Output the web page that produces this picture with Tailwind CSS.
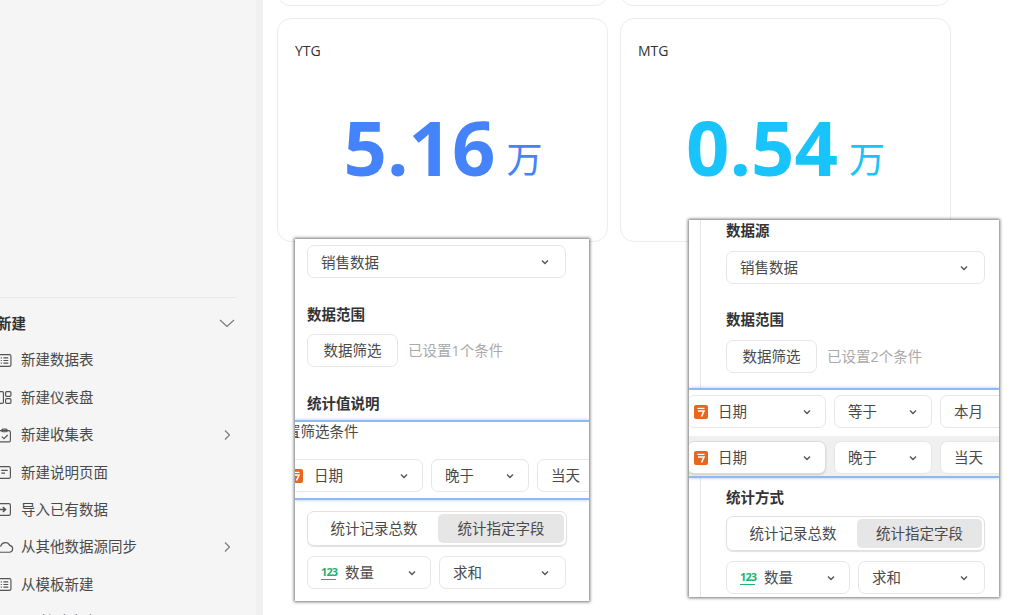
<!DOCTYPE html>
<html lang="zh-CN">
<head>
<meta charset="UTF-8">
<title>仪表盘</title>
<script src="https://cdn.jsdelivr.net/npm/@tailwindcss/browser@4"></script>
</head>
<body class="relative w-[1024px] h-[615px] overflow-hidden bg-white font-['Open_Sans','Noto_Sans_CJK_SC',sans-serif] text-[14.5px] text-[#4a4a4a]">
<div class="flex h-full">
  <!-- Sidebar -->
  <aside class="w-[256px] h-full shrink-0 bg-[#f5f5f5] overflow-hidden relative">
    <div class="mt-[297px] w-[236px] border-t border-[#e8e8e8]"></div>
    <div class="flex items-center justify-between w-[236px] h-[51px] -mt-px -mb-[6.4px]">
      <span class="font-bold text-[#333] -ml-[3px] translate-y-px">新建</span>
      <svg class="w-4 h-4 mr-px" viewBox="0 0 16 16" fill="none" stroke="#777" stroke-width="1.1"><path d="M1 5l7 6.5L15 5"/></svg>
    </div>
    <div class="flex flex-col w-[236px]">
      <div class="flex items-center h-[37.4px]"><svg class="w-[15px] h-[15px] -ml-[3px] mr-[9px] shrink-0" viewBox="0 0 14 14" fill="none" stroke="#555" stroke-width="1.1"><rect x="1" y="1.5" width="12" height="11" rx="1.5"/><path d="M3.5 4.5h1M3.5 7h1M3.5 9.5h1M6 4.5h4.5M6 7h4.5M6 9.5h4.5"/></svg><span>新建数据表</span></div>
      <div class="flex items-center h-[37.4px]"><svg class="w-[15px] h-[15px] -ml-[3px] mr-[9px] shrink-0" viewBox="0 0 14 14" fill="none" stroke="#555" stroke-width="1.1"><rect x="1" y="1.5" width="5" height="11" rx="1"/><rect x="8" y="1.5" width="5" height="4.5" rx="1"/><rect x="8" y="8" width="5" height="4.5" rx="1"/></svg><span>新建仪表盘</span></div>
      <div class="flex items-center h-[37.4px]"><svg class="w-[15px] h-[15px] -ml-[3px] mr-[9px] shrink-0" viewBox="0 0 14 14" fill="none" stroke="#555" stroke-width="1.1"><rect x="1.5" y="2.5" width="11" height="10.5" rx="1.5"/><rect x="4.5" y="1" width="5" height="2.5" rx="1"/><path d="M4.5 8l2 2 3.5-3.5"/></svg><span>新建收集表</span><svg class="w-3 h-3 ml-auto mr-[3px]" viewBox="0 0 12 12" fill="none" stroke="#777" stroke-width="1.1"><path d="M4 1.5L8.5 6 4 10.5"/></svg></div>
      <div class="flex items-center h-[37.4px]"><svg class="w-[15px] h-[15px] -ml-[3px] mr-[9px] shrink-0" viewBox="0 0 14 14" fill="none" stroke="#555" stroke-width="1.1"><rect x="1" y="1.5" width="11.5" height="11" rx="1.5"/><path d="M4 5h6M4 7.5h3.5"/></svg><span>新建说明页面</span></div>
      <div class="flex items-center h-[37.4px]"><svg class="w-[15px] h-[15px] -ml-[3px] mr-[9px] shrink-0" viewBox="0 0 14 14" fill="none" stroke="#555" stroke-width="1.1"><rect x="1" y="1.5" width="11.5" height="11" rx="1.5"/><path d="M1 7h6.5M5.5 4.8L8 7l-2.5 2.2" stroke-width="1.4"/></svg><span>导入已有数据</span></div>
      <div class="flex items-center h-[37.4px]"><svg class="w-[17px] h-[15px] -ml-[3px] mr-[7px] shrink-0" viewBox="0 0 16 14" fill="none" stroke="#555" stroke-width="1.1"><path d="M4 11.5a3 3 0 0 1-.3-6A4.5 4.5 0 0 1 12 5a3.3 3.3 0 0 1 0 6.5z"/></svg><span>从其他数据源同步</span><svg class="w-3 h-3 ml-auto mr-[3px]" viewBox="0 0 12 12" fill="none" stroke="#777" stroke-width="1.1"><path d="M4 1.5L8.5 6 4 10.5"/></svg></div>
      <div class="flex items-center h-[37.4px]"><svg class="w-[15px] h-[15px] -ml-[3px] mr-[9px] shrink-0" viewBox="0 0 14 14" fill="none" stroke="#555" stroke-width="1.1"><rect x="1" y="1.5" width="12" height="11" rx="1.5"/><path d="M3.5 4.5h1M3.5 7h1M3.5 9.5h1M6 4.5h4.5M6 7h4.5M6 9.5h4.5"/></svg><span>从模板新建</span></div>
      <div class="flex items-center h-[37.4px]"><span class="w-[5px] h-[12px] ml-[2px] mr-[33px] bg-[#6f9ff5]"></span><span>特殊内容</span></div>
    </div>
  </aside>
  <div class="w-[7px] h-full shrink-0 bg-[#f0f0f0]"></div>

  <!-- Cards -->
  <main class="flex-1 pl-[14px]">
    <div class="flex gap-[12px] -mt-[20px]">
      <div class="w-[331px] h-[26px] rounded-[14px] border border-[#ececec]"></div>
      <div class="w-[331px] h-[26px] rounded-[14px] border border-[#ececec]"></div>
    </div>
    <div class="flex gap-[12px] mt-[12px]">
      <div class="w-[331px] h-[224px] rounded-[14px] border border-[#ececec] px-[17px] pt-[22px]">
        <div class="text-[14px] leading-5 text-[#333]">YTG</div>
        <div class="flex items-baseline justify-center mt-[41px] pl-[1px] text-[#4583fb]">
          <span class="text-[76px] leading-[90px] font-bold">5.16</span><span class="text-[36px] ml-[11px] -translate-y-[3px]">万</span>
        </div>
      </div>
      <div class="w-[331px] h-[224px] rounded-[14px] border border-[#ececec] px-[17px] pt-[22px]">
        <div class="text-[14px] leading-5 text-[#333]">MTG</div>
        <div class="flex items-baseline justify-center mt-[41px] text-[#19c3fb]">
          <span class="text-[76px] leading-[90px] font-bold">0.54</span><span class="text-[36px] ml-[11px] -translate-y-[3px]">万</span>
        </div>
      </div>
    </div>
  </main>
</div>

<!-- Pasted panel 1 -->
<section class="absolute left-[295px] top-[239px] w-[294px] h-[362px] bg-white overflow-hidden shadow-[0_0_3px_1px_rgba(0,0,0,0.55)]">
  <div class="px-[12px] pt-[6px]">
    <div class="flex items-center justify-between w-[259px] h-[33px] px-[13px] rounded-[7px] border border-[#e6e6e6]">
      <span class="translate-y-px">销售数据</span>
      <svg class="w-[10px] h-[10px] mr-[2px]" viewBox="0 0 10 10" fill="none" stroke="#555" stroke-width="1.4"><path d="M2 3.5L5 6.5 8 3.5"/></svg>
    </div>
    <div class="mt-[27px] font-bold text-[#333] leading-5">数据范围</div>
    <div class="flex items-center mt-[9px]">
      <div class="w-[91px] h-[33px] rounded-[7px] border border-[#e6e6e6] flex items-center justify-center"><span>数据筛选</span></div>
      <span class="ml-[10px] text-[#aaa]">已设置1个条件</span>
    </div>
    <div class="mt-[27px] font-bold text-[#333] leading-5">统计值说明</div>
  </div>
  <div class="mt-[6px] h-[80px] border-y-2 border-[#8fb8f5] shadow-[0_0_3px_rgba(100,160,245,0.6)] bg-white overflow-hidden relative">
    <div class="-ml-[9px] leading-5 whitespace-nowrap">置筛选条件</div>
    <div class="flex gap-[8px] mt-[17px] -ml-[4px]">
      <div class="flex items-center w-[132px] h-[33px] shrink-0 pr-[13px] rounded-[7px] border border-[#e6e6e6]">
        <svg class="w-[14px] h-[14px] -ml-[3px] shrink-0" viewBox="0 0 14 14"><rect width="14" height="14" rx="2" fill="#e8671c"/><path d="M3.5 3.4h7" stroke="#fff" stroke-width="1.2"/><path d="M4 6h6L7.5 11.5" fill="none" stroke="#fff" stroke-width="1.6"/></svg>
        <span class="ml-[11px]">日期</span>
        <svg class="w-[10px] h-[10px] ml-auto" viewBox="0 0 10 10" fill="none" stroke="#555" stroke-width="1.4"><path d="M2 3.5L5 6.5 8 3.5"/></svg>
      </div>
      <div class="flex items-center w-[98px] h-[33px] shrink-0 px-[13px] rounded-[7px] border border-[#e6e6e6]">
        <span>晚于</span>
        <svg class="w-[10px] h-[10px] ml-auto" viewBox="0 0 10 10" fill="none" stroke="#555" stroke-width="1.4"><path d="M2 3.5L5 6.5 8 3.5"/></svg>
      </div>
      <div class="flex items-center w-[80px] h-[33px] shrink-0 pl-[13px] rounded-[7px] border border-[#e6e6e6]"><span>当天</span></div>
    </div>
    <div class="ml-[12px] mt-[4px] font-bold text-[#999] leading-5">统计方式</div>
  </div>
  <div class="px-[12px] pt-[11px]">
    <div class="flex w-[260px] h-[35px] p-[2px] rounded-[7px] border border-[#e0e0e0] shadow-[0_1px_1px_rgba(0,0,0,0.12)]">
      <div class="w-[128px] flex items-center justify-center"><span>统计记录总数</span></div>
      <div class="flex-1 flex items-center justify-center rounded-[5px] bg-[#e6e6e6]"><span>统计指定字段</span></div>
    </div>
    <div class="flex gap-[8px] mt-[10px]">
      <div class="flex items-center w-[124px] h-[33px] pl-[13px] pr-[13px] rounded-[7px] border border-[#e6e6e6]">
        <span class="w-[15px] text-[11px] font-bold tracking-[-0.9px] leading-[12px] pb-px text-[#1faf72] border-b border-[#1faf72]">123</span>
        <span class="ml-[9px]">数量</span>
        <svg class="w-[10px] h-[10px] ml-auto" viewBox="0 0 10 10" fill="none" stroke="#555" stroke-width="1.4"><path d="M2 3.5L5 6.5 8 3.5"/></svg>
      </div>
      <div class="flex items-center w-[127px] h-[33px] px-[13px] rounded-[7px] border border-[#e6e6e6]">
        <span>求和</span>
        <svg class="w-[10px] h-[10px] ml-auto mr-[2px]" viewBox="0 0 10 10" fill="none" stroke="#555" stroke-width="1.4"><path d="M2 3.5L5 6.5 8 3.5"/></svg>
      </div>
    </div>
  </div>
</section>

<!-- Pasted panel 2 -->
<section class="absolute left-[689px] top-[220px] w-[310px] h-[377px] bg-white overflow-hidden shadow-[0_0_3px_1px_rgba(0,0,0,0.55)]">
  <div class="absolute left-[11px] top-0 bottom-0 w-px bg-[#e6e6e6]"></div>
  <div class="relative pl-[37px] pt-[1px]">
    <div class="font-bold text-[#333] leading-5">数据源</div>
    <div class="flex items-center justify-between w-[259px] h-[33px] mt-[10px] px-[13px] rounded-[7px] border border-[#e6e6e6] bg-white">
      <span>销售数据</span>
      <svg class="w-[10px] h-[10px] mr-[2px]" viewBox="0 0 10 10" fill="none" stroke="#555" stroke-width="1.4"><path d="M2 3.5L5 6.5 8 3.5"/></svg>
    </div>
    <div class="mt-[26px] font-bold text-[#333] leading-5">数据范围</div>
    <div class="flex items-center mt-[10px]">
      <div class="w-[91px] h-[33px] rounded-[7px] border border-[#e6e6e6] flex items-center justify-center"><span>数据筛选</span></div>
      <span class="ml-[10px] text-[#aaa]">已设置2个条件</span>
    </div>
  </div>
  <div class="relative mt-[15px] h-[90px] border-y-2 border-[#8fb8f5] shadow-[0_0_3px_rgba(100,160,245,0.6)] bg-white overflow-hidden">
    <div class="flex gap-[8px] pt-[5px] -ml-[2px]">
      <div class="flex items-center w-[139px] h-[33px] shrink-0 pl-[6px] pr-[13px] rounded-[7px] border border-[#e6e6e6]">
        <svg class="w-[14px] h-[14px] shrink-0" viewBox="0 0 14 14"><rect width="14" height="14" rx="2" fill="#e8671c"/><path d="M3.5 3.4h7" stroke="#fff" stroke-width="1.2"/><path d="M4 6h6L7.5 11.5" fill="none" stroke="#fff" stroke-width="1.6"/></svg>
        <span class="ml-[10px]">日期</span>
        <svg class="w-[10px] h-[10px] ml-auto" viewBox="0 0 10 10" fill="none" stroke="#555" stroke-width="1.4"><path d="M2 3.5L5 6.5 8 3.5"/></svg>
      </div>
      <div class="flex items-center w-[98px] h-[33px] shrink-0 px-[13px] rounded-[7px] border border-[#e6e6e6]">
        <span>等于</span>
        <svg class="w-[10px] h-[10px] ml-auto" viewBox="0 0 10 10" fill="none" stroke="#555" stroke-width="1.4"><path d="M2 3.5L5 6.5 8 3.5"/></svg>
      </div>
      <div class="flex items-center w-[80px] h-[33px] shrink-0 pl-[13px] rounded-[7px] border border-[#e6e6e6]"><span>本月</span></div>
    </div>
    <div class="flex gap-[8px] mt-[8px] h-[42px] pt-[5px] -ml-[2px] bg-[#f0f0f0]">
      <div class="flex items-center w-[139px] h-[33px] shrink-0 pl-[6px] pr-[13px] rounded-[7px] border border-[#dcdcdc] bg-white shadow-[0_1px_2px_rgba(0,0,0,0.15)]">
        <svg class="w-[14px] h-[14px] shrink-0" viewBox="0 0 14 14"><rect width="14" height="14" rx="2" fill="#e8671c"/><path d="M3.5 3.4h7" stroke="#fff" stroke-width="1.2"/><path d="M4 6h6L7.5 11.5" fill="none" stroke="#fff" stroke-width="1.6"/></svg>
        <span class="ml-[10px]">日期</span>
        <svg class="w-[10px] h-[10px] ml-auto" viewBox="0 0 10 10" fill="none" stroke="#555" stroke-width="1.4"><path d="M2 3.5L5 6.5 8 3.5"/></svg>
      </div>
      <div class="flex items-center w-[98px] h-[33px] shrink-0 px-[13px] rounded-[7px] bg-white border border-[#e6e6e6]">
        <span>晚于</span>
        <svg class="w-[10px] h-[10px] ml-auto" viewBox="0 0 10 10" fill="none" stroke="#555" stroke-width="1.4"><path d="M2 3.5L5 6.5 8 3.5"/></svg>
      </div>
      <div class="flex items-center w-[80px] h-[33px] shrink-0 pl-[13px] rounded-[7px] bg-white border border-[#e6e6e6]"><span>当天</span></div>
    </div>
  </div>
  <div class="relative pl-[37px] pt-[10px]">
    <div class="font-bold text-[#333] leading-5">统计方式</div>
    <div class="flex w-[259px] h-[35px] mt-[8px] p-[2px] rounded-[7px] border border-[#e0e0e0] shadow-[0_1px_1px_rgba(0,0,0,0.12)]">
      <div class="w-[128px] flex items-center justify-center"><span>统计记录总数</span></div>
      <div class="flex-1 flex items-center justify-center rounded-[5px] bg-[#e6e6e6]"><span>统计指定字段</span></div>
    </div>
    <div class="flex gap-[8px] mt-[10px]">
      <div class="flex items-center w-[124px] h-[33px] px-[13px] rounded-[7px] border border-[#e6e6e6]">
        <span class="w-[15px] text-[11px] font-bold tracking-[-0.9px] leading-[12px] pb-px text-[#1faf72] border-b border-[#1faf72]">123</span>
        <span class="ml-[9px]">数量</span>
        <svg class="w-[10px] h-[10px] ml-auto" viewBox="0 0 10 10" fill="none" stroke="#555" stroke-width="1.4"><path d="M2 3.5L5 6.5 8 3.5"/></svg>
      </div>
      <div class="flex items-center w-[127px] h-[33px] px-[13px] rounded-[7px] border border-[#e6e6e6]">
        <span>求和</span>
        <svg class="w-[10px] h-[10px] ml-auto mr-[2px]" viewBox="0 0 10 10" fill="none" stroke="#555" stroke-width="1.4"><path d="M2 3.5L5 6.5 8 3.5"/></svg>
      </div>
    </div>
  </div>
</section>
</body>
</html>
